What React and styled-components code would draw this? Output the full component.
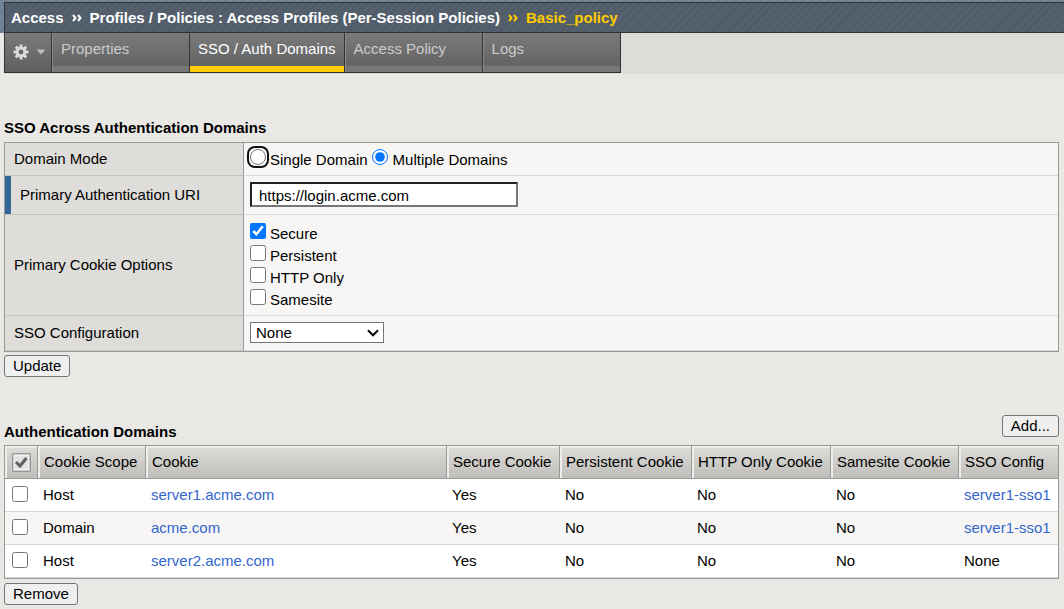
import React, { useState } from "react";
import styled, { createGlobalStyle } from "styled-components";

const GlobalStyle = createGlobalStyle`
  * { box-sizing: border-box; }
  body {
    margin: 0;
    background: #e9e8e4;
    color: #000;
    font: 15px/18px "Liberation Sans", Arial, sans-serif;
  }
  button, input, select { font: inherit; color: inherit; }
`;

const Banner = styled.header`
  padding: 2px 0 0 4px;
  background: repeating-linear-gradient(135deg, #72859a 0 3px, #6d8093 3px 6px);
`;

const Breadcrumb = styled.nav`
  display: flex;
  align-items: center;
  gap: 8px;
  height: 31px;
  padding: 0 6px;
  border: solid #2e3338;
  border-width: 1px 0 1px 1px;
  background: repeating-linear-gradient(135deg, #54606c 0 3px, #505c69 3px 6px);
  font-weight: bold;
  white-space: nowrap;
  color: #fff;
`;

const Crumb = styled.a`
  color: ${(p) => (p.$current ? "#fc0" : "#fff")};
  text-decoration: none;
`;

const Chevron = styled.svg`
  width: 10px;
  height: 8px;
  fill: none;
  stroke: ${(p) => (p.$current ? "#fc0" : "#fff")};
  stroke-width: 2;
`;

const TabStrip = styled.div`
  display: flex;
  height: 41px;
  margin-left: 4px;
  background: #dddcd8;
`;

const TabList = styled.nav`
  display: flex;
  height: 40px;
  border: solid #333;
  border-width: 0 0 1px 1px;
`;

const GearButton = styled.button`
  display: flex;
  align-items: center;
  gap: 7px;
  width: 47px;
  padding: 0 0 2px 8px;
  border: 0;
  border-right: 1px solid #333;
  background: linear-gradient(#7a7a7a, #5f5f5f);
`;

const Tab = styled.a`
  min-width: ${(p) => (p.$active ? "0" : "138px")};
  padding: 7px 8px 0 ${(p) => (p.$active ? "8px" : "9px")};
  border-right: 1px solid #333;
  background:
    linear-gradient(${(p) => (p.$active ? "#fc0, #fc0" : "#777, #777")}) 0 100% / 100% 6px no-repeat,
    linear-gradient(#7a7a7a, #606060);
  box-shadow: ${(p) => (p.$active ? "none" : "inset 1px 0 #8a8a8a")};
  color: ${(p) => (p.$active ? "#fff" : "#ccc")};
  text-decoration: none;
  white-space: nowrap;
`;

const Page = styled.main`
  padding: 45px 5px 4px 4px;
`;

const Heading = styled.h2`
  margin: 0;
  font-size: 15px;
  line-height: 18px;
`;

const FormTable = styled.table`
  width: 100%;
  margin: 5px 0 3px;
  border: 1px solid #999;
  border-spacing: 0;
  table-layout: fixed;
`;

const FieldName = styled.th`
  width: 239px;
  padding: 0 9px;
  border-right: 1px solid #999;
  border-bottom: 1px solid #c4c3c0;
  background: #deddd9;
  box-shadow: ${(p) => (p.$required ? "inset 6px 0 #369" : "none")};
  padding-left: ${(p) => (p.$required ? "15px" : "9px")};
  font-weight: normal;
  text-align: left;
`;

const FieldCell = styled.td`
  height: ${(p) => p.$height}px;
  padding: 0 6px 1px;
  border-bottom: 1px solid #d8d8d8;
  background: #f7f6f5;
`;

const OptionRow = styled.div`
  display: flex;
  gap: 4px;
  padding-top: 3px;
`;

const OptionColumn = styled.div`
  display: flex;
  flex-direction: column;
  align-items: flex-start;
  padding-top: 5px;
`;

const Option = styled.label`
  display: flex;
  align-items: center;
  gap: ${(p) => p.$gap}px;
  height: 22px;
`;

const Toggle = styled.input`
  display: block;
  width: 16px;
  height: 16px;
  margin: 0 0 ${(p) => p.$below ?? 6}px;
`;

const FocusRing = styled.span`
  margin-bottom: 6px;
  border-radius: 5px;
  background: #fff;
  box-shadow: 0 0 0 1px #fff, 0 0 0 3px #101010;
`;

const TextBox = styled.input`
  display: block;
  width: 268px;
  height: 25px;
  padding: 2px 7px 0;
  border: 2px inset #767676;
  background: #fff;
`;

const SelectBox = styled.div`
  display: grid;
  width: 134px;
  align-items: center;
  & > * { grid-area: 1 / 1; }
  & > svg {
    z-index: 1;
    justify-self: end;
    margin-right: 5px;
    pointer-events: none;
  }
`;

const Select = styled.select`
  appearance: none;
  width: 100%;
  height: 21px;
  padding: 0 5px;
  border: 1px solid #767676;
  border-radius: 0;
  background: #fff;
`;

const PushButton = styled.button`
  display: block;
  height: 22px;
  padding: 0 8px;
  border: 1px solid #767676;
  border-radius: 3px;
  background: #efefef;
  line-height: 20px;
`;

const SectionHead = styled.div`
  display: flex;
  justify-content: space-between;
  align-items: flex-start;
  margin-top: 38px;
  & > h2 { padding-top: 8px; }
`;

const DataTable = styled.table`
  width: 100%;
  margin: 4px 0;
  border: 1px solid #999;
  border-spacing: 0;
  table-layout: fixed;
`;

const HeadCell = styled.th`
  height: 33px;
  padding: 0 6px;
  border-right: 1px solid #999;
  border-bottom: 1px solid #999;
  background: linear-gradient(#dddcd8, #bfbebb);
  box-shadow: inset 2px 2px #efeeec;
  font-weight: normal;
  text-align: left;
  white-space: nowrap;
  &:first-child { padding-left: 7px; }
  &:last-child { border-right: 0; }
`;

const DataRow = styled.tr`
  background: ${(p) => (p.$alt ? "#f7f6f5" : "#fff")};
`;

const DataCell = styled.td`
  height: 33px;
  padding: 0 5px;
  border-bottom: 1px solid #d8d8d8;
  &:first-child { padding-left: 7px; }
`;

const Link = styled.a`
  color: #36c;
  text-decoration: none;
`;

const SelectAll = styled.label`
  display: grid;
  width: 19px;
  height: 19px;
  & > * { grid-area: 1 / 1; }
  & > input {
    appearance: none;
    width: 19px;
    height: 19px;
    margin: 0;
    border: 1px solid #999;
    border-radius: 1px;
    background: #e4e3e1;
    box-shadow: inset 0 0 0 1px #c8c8c8, inset 0 0 0 2px #f2f2f2;
  }
  & > svg { pointer-events: none; z-index: 1; }
`;

const columns = [
  ["Cookie Scope", 108],
  ["Cookie", null],
  ["Secure Cookie", 113],
  ["Persistent Cookie", 132],
  ["HTTP Only Cookie", 139],
  ["Samesite Cookie", 128],
  ["SSO Config", 99],
];

const domains = [
  { scope: "Host", cookie: "server1.acme.com", sso: "server1-sso1" },
  { scope: "Domain", cookie: "acme.com", sso: "server1-sso1" },
  { scope: "Host", cookie: "server2.acme.com", sso: null },
];

function Separator({ current }) {
  return (
    <Chevron $current={current} viewBox="0 0 10 8" aria-hidden="true">
      <path d="M1 1l2.5 3L1 7M6 1l2.5 3L6 7" />
    </Chevron>
  );
}

function Gear() {
  return (
    <svg width="16" height="16" viewBox="0 0 16 16" aria-hidden="true">
      <g fill="#dcdcdc">
        {[0, 45, 90, 135].map((a) => (
          <rect key={a} x="6.5" y="0.5" width="3" height="15" rx="0.5" transform={`rotate(${a} 8 8)`} />
        ))}
        <circle cx="8" cy="8" r="5.2" />
      </g>
      <circle cx="8" cy="8" r="2.4" fill="#686868" />
    </svg>
  );
}

export default function App() {
  const [mode, setMode] = useState("multiple");
  return (
    <>
      <GlobalStyle />
      <Banner>
        <Breadcrumb aria-label="Breadcrumb">
          <Crumb href="#access">Access</Crumb>
          <Separator />
          <Crumb href="#profiles">Profiles / Policies : Access Profiles (Per-Session Policies)</Crumb>
          <Separator current />
          <Crumb href="#policy" $current>Basic_policy</Crumb>
        </Breadcrumb>
      </Banner>
      <TabStrip>
        <TabList>
          <GearButton type="button" aria-label="Options">
            <Gear />
            <svg width="10" height="6" viewBox="0 0 10 6" aria-hidden="true">
              <path d="M0.5 0.5h9L5 5.5z" fill="#bbb" />
            </svg>
          </GearButton>
          <Tab href="#properties">Properties</Tab>
          <Tab href="#sso" $active>SSO / Auth Domains</Tab>
          <Tab href="#access-policy">Access Policy</Tab>
          <Tab href="#logs">Logs</Tab>
        </TabList>
      </TabStrip>
      <Page>
        <Heading>SSO Across Authentication Domains</Heading>
        <FormTable>
          <tbody>
            <tr>
              <FieldName scope="row">Domain Mode</FieldName>
              <FieldCell $height={33}>
                <OptionRow>
                  <Option $gap={4}>
                    <FocusRing>
                      <Toggle type="radio" name="mode" $below={0} checked={mode === "single"} onChange={() => setMode("single")} />
                    </FocusRing>
                    Single Domain
                  </Option>
                  <Option $gap={5}>
                    <Toggle type="radio" name="mode" checked={mode === "multiple"} onChange={() => setMode("multiple")} />
                    Multiple Domains
                  </Option>
                </OptionRow>
              </FieldCell>
            </tr>
            <tr>
              <FieldName scope="row" $required><label htmlFor="uri">Primary Authentication URI</label></FieldName>
              <FieldCell $height={39}>
                <TextBox id="uri" type="text" defaultValue="https://login.acme.com" />
              </FieldCell>
            </tr>
            <tr>
              <FieldName scope="row">Primary Cookie Options</FieldName>
              <FieldCell $height={101}>
                <OptionColumn>
                  {["Secure", "Persistent", "HTTP Only", "Samesite"].map((name, i) => (
                    <Option key={name} $gap={4}>
                      <Toggle type="checkbox" defaultChecked={i === 0} />
                      {name}
                    </Option>
                  ))}
                </OptionColumn>
              </FieldCell>
            </tr>
            <tr>
              <FieldName scope="row"><label htmlFor="sso-config">SSO Configuration</label></FieldName>
              <FieldCell $height={35}>
                <SelectBox>
                  <Select id="sso-config" defaultValue="None">
                    <option>None</option>
                    <option>server1-sso1</option>
                  </Select>
                  <svg width="12" height="8" viewBox="0 0 12 8" aria-hidden="true">
                    <path d="M1 1.2l5 5 5-5" fill="none" stroke="#111" strokeWidth="2.2" />
                  </svg>
                </SelectBox>
              </FieldCell>
            </tr>
          </tbody>
        </FormTable>
        <PushButton type="button">Update</PushButton>
        <SectionHead>
          <Heading>Authentication Domains</Heading>
          <PushButton type="button">Add...</PushButton>
        </SectionHead>
        <DataTable>
          <colgroup>
            <col width={33} />
            {columns.map(([name, width]) => <col key={name} width={width ?? undefined} />)}
          </colgroup>
          <thead>
            <tr>
              <HeadCell scope="col">
                <SelectAll>
                  <input type="checkbox" defaultChecked aria-label="Select all" />
                  <svg width="19" height="19" viewBox="0 0 19 19" aria-hidden="true">
                    <path d="M4 9l4 4 6.5-8" fill="none" stroke="#606060" strokeWidth="3" />
                  </svg>
                </SelectAll>
              </HeadCell>
              {columns.map(([name]) => <HeadCell key={name} scope="col">{name}</HeadCell>)}
            </tr>
          </thead>
          <tbody>
            {domains.map((d, i) => (
              <DataRow key={d.cookie} $alt={i % 2 === 1}>
                <DataCell>
                  <Toggle type="checkbox" $below={2} aria-label={`Select ${d.cookie}`} />
                </DataCell>
                <DataCell>{d.scope}</DataCell>
                <DataCell><Link href={`#${d.cookie}`}>{d.cookie}</Link></DataCell>
                <DataCell>Yes</DataCell>
                <DataCell>No</DataCell>
                <DataCell>No</DataCell>
                <DataCell>No</DataCell>
                <DataCell>{d.sso ? <Link href={`#${d.sso}`}>{d.sso}</Link> : "None"}</DataCell>
              </DataRow>
            ))}
          </tbody>
        </DataTable>
        <PushButton type="button">Remove</PushButton>
      </Page>
    </>
  );
}
